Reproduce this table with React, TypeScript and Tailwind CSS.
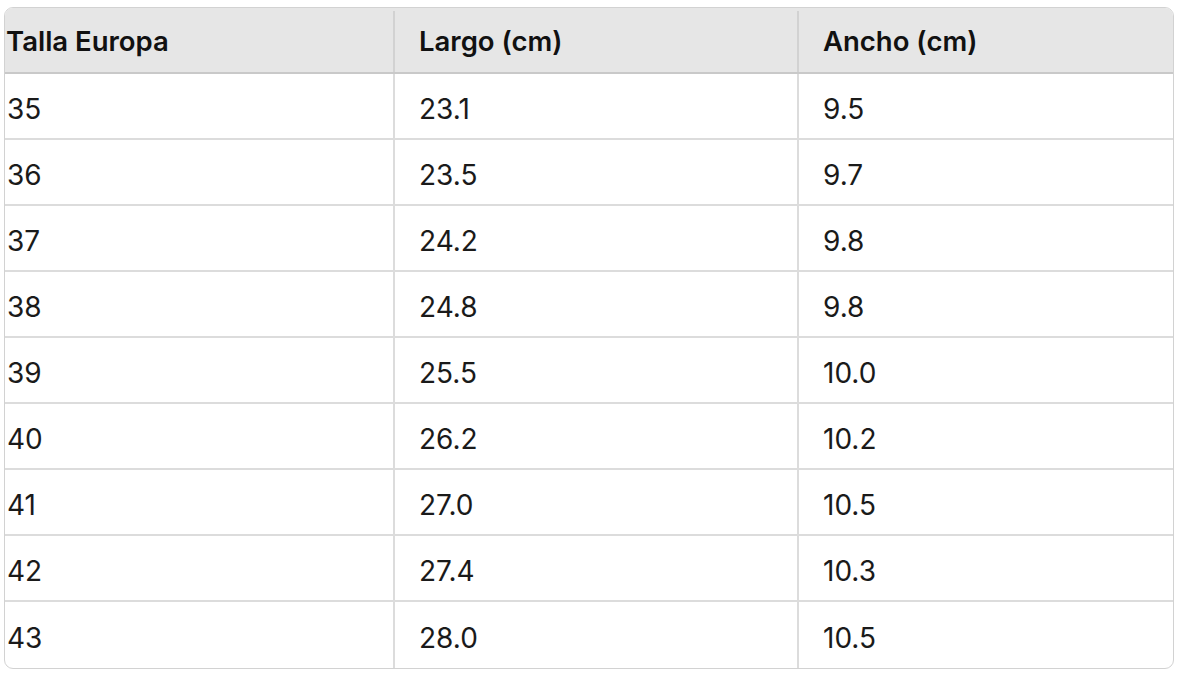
const rows: [string, string, string][] = [
  ['35', '23.1', '9.5'],
  ['36', '23.5', '9.7'],
  ['37', '24.2', '9.8'],
  ['38', '24.8', '9.8'],
  ['39', '25.5', '10.0'],
  ['40', '26.2', '10.2'],
  ['41', '27.0', '10.5'],
  ['42', '27.4', '10.3'],
  ['43', '28.0', '10.5'],
];

export default function App() {
  return (
    <div className="min-h-screen bg-white pt-[7px] pl-[4px] font-['Inter','Liberation_Sans',sans-serif] text-[#1a1a1a]">
      <div className="w-[1170px] overflow-hidden rounded-[9px] border border-[#d2d2d2]">
        <div className="grid h-[66px] grid-cols-[388px_404px_1fr] border-b-2 border-[#c9c9c9] bg-[#e6e6e6] pt-[3px] text-[27.5px] font-semibold text-[#111]">
          <div className="flex items-center pl-[1px]">Talla Europa</div>
          <div className="flex items-center border-l-2 border-[#d2d2d2] pl-[24px]">Largo (cm)</div>
          <div className="flex items-center border-l-2 border-[#d2d2d2] pl-[24px]">Ancho (cm)</div>
        </div>
        {rows.map((r, i) => (
          <div
            key={r[0]}
            className={`grid h-[66px] grid-cols-[388px_404px_1fr] text-[28px] ${
              i < rows.length - 1 ? 'border-b-2 border-[#dcdcdc]' : ''
            }`}
          >
            <div className="flex items-center pl-[2px] pt-[5px]">{r[0]}</div>
            <div className="flex items-center border-l-2 border-[#dcdcdc] pl-[24px] pt-[5px]">{r[1]}</div>
            <div className="flex items-center border-l-2 border-[#dcdcdc] pl-[24px] pt-[5px]">{r[2]}</div>
          </div>
        ))}
      </div>
    </div>
  );
}
